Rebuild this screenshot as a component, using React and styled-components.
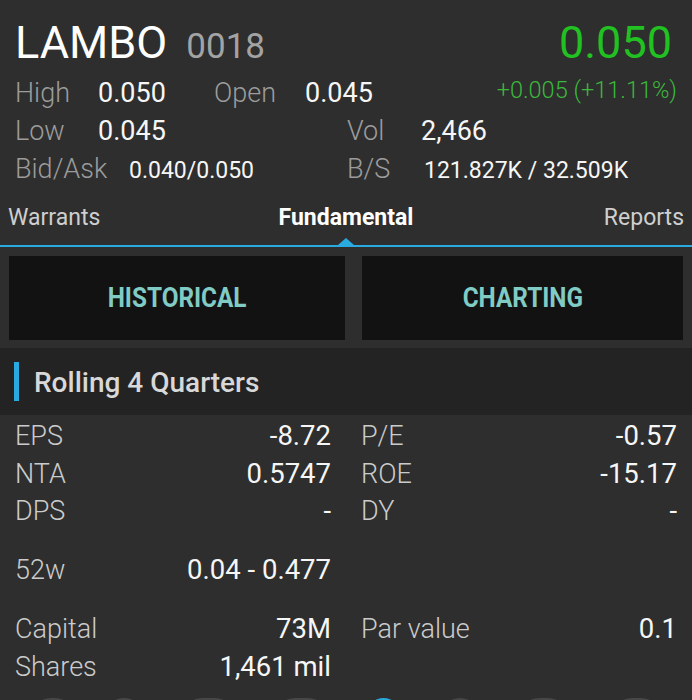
import styled, { createGlobalStyle } from "styled-components";

const GlobalStyle = createGlobalStyle`
  html, body {
    margin: 0;
    padding: 0;
    background: #2e2e2e;
  }
  body {
    font-family: Roboto, "Noto Sans", "Liberation Sans", sans-serif;
  }
`;

const Page = styled.div`
  width: 692px;
  height: 700px;
  overflow: hidden;
  background: #2e2e2e;
  color: #f4f4f4;
`;

const Quote = styled.header`
  padding: 17px 15px 0 15px;
`;

const TitleRow = styled.div`
  display: flex;
  align-items: baseline;
  justify-content: space-between;
  line-height: 52px;
  margin-bottom: 1px;
`;

const Symbol = styled.div`
  display: flex;
  align-items: baseline;
  gap: 19px;
`;

const Name = styled.span`
  font-size: 45px;
  color: #ffffff;
`;

const Code = styled.span`
  font-size: 35px;
  color: #a3a3a3;
`;

const Price = styled.span`
  font-size: 45px;
  color: #22c122;
  margin-right: 5px;
`;

const StatRow = styled.div`
  display: grid;
  grid-template-columns: 332px 1fr;
  height: 38px;
  line-height: 38px;
`;

const Half = styled.div`
  display: flex;
  align-items: baseline;
`;

const StatLabel = styled.span`
  width: ${(p) => p.$w}px;
  font-size: 27px;
  font-weight: 300;
  color: #9c9c9c;
  flex: none;
`;

const StatValue = styled.span`
  width: ${(p) => (p.$w ? `${p.$w}px` : "auto")};
  font-size: ${(p) => (p.$small ? 23 : 27)}px;
  color: #f6f6f6;
  flex: none;
`;

const Change = styled.span`
  justify-self: end;
  align-self: start;
  line-height: 32px;
  font-size: 23.5px;
  font-weight: 300;
  color: #3cb83c;
`;

const TabBar = styled.nav`
  display: grid;
  grid-template-columns: 1fr auto 1fr;
  box-sizing: border-box;
  height: 59px;
  padding: 18px 8px 0 8px;
  border-bottom: 2px solid #29abe2;
`;

const Tab = styled.span`
  position: relative;
  font-size: 23px;
  line-height: 23px;
  font-weight: ${(p) => (p.$active ? 700 : 400)};
  color: ${(p) => (p.$active ? "#ffffff" : "#cfcfcf")};
  justify-self: ${(p) => p.$align || "center"};

  ${(p) =>
    p.$active &&
    `
    &::after {
      content: "";
      position: absolute;
      left: 50%;
      bottom: 0;
      margin-left: -8px;
      border-left: 8px solid transparent;
      border-right: 8px solid transparent;
      border-bottom: 7px solid #29abe2;
    }
  `}
`;

const ActionGrid = styled.div`
  display: grid;
  grid-template-columns: 336px 321px;
  gap: 17px;
  padding: 9px 0 8px 9px;
`;

const ActionButton = styled.button`
  height: 84px;
  border: none;
  background: #121212;
  color: #80cbc4;
  font-family: Roboto, "Noto Sans", sans-serif;
  font-size: 27px;
  font-weight: 700;
  padding: 0;

  span {
    display: inline-block;
    transform: scaleX(0.9);
  }
`;

const SectionHead = styled.div`
  display: flex;
  align-items: center;
  gap: 15px;
  height: 67px;
  padding-left: 14px;
  background: #232323;
`;

const Marker = styled.i`
  width: 5px;
  height: 39px;
  background: #29abe2;
`;

const SectionTitle = styled.span`
  font-size: 28px;
  font-weight: 500;
  color: #d8d8d8;
  margin-top: 2px;
`;

const Data = styled.section`
  display: flex;
  flex-direction: column;
  gap: 21.5px;
  padding: 2px 15px 0 15px;
`;

const DataGrid = styled.div`
  display: grid;
  grid-template-columns: 316px 316px;
  column-gap: 30px;
`;

const Cell = styled.div`
  display: flex;
  justify-content: space-between;
  align-items: baseline;
  height: 37.5px;
  line-height: 37.5px;
`;

const DataLabel = styled.span`
  font-size: 27px;
  font-weight: 300;
  color: #cbcbcb;
`;

const DataValue = styled.span`
  font-size: 27.5px;
  color: #f6f6f6;
`;

const Dock = styled.div`
  display: flex;
  margin-top: 13px;
  padding-left: 31px;
`;

const Dot = styled.span`
  width: ${(p) => p.$w}px;
  height: 40px;
  margin-left: ${(p) => p.$ml}px;
  border-radius: 20px;
  background: ${(p) => (p.$on ? "#2aa7de" : "#474747")};
  flex: none;
`;

const fundamentals = [
  ["EPS", "-8.72", "P/E", "-0.57"],
  ["NTA", "0.5747", "ROE", "-15.17"],
  ["DPS", "-", "DY", "-"],
];

const dots = [
  { w: 44, ml: 0 },
  { w: 36, ml: 31 },
  { w: 53, ml: 40 },
  { w: 53, ml: 40 },
  { w: 33, ml: 39, on: true },
  { w: 40, ml: 40 },
  { w: 49, ml: 39 },
  { w: 49, ml: 44 },
];

const DataRow = ({ label, value, label2, value2 }) => (
  <>
    <Cell>
      <DataLabel>{label}</DataLabel>
      <DataValue>{value}</DataValue>
    </Cell>
    <Cell>
      {label2 && <DataLabel>{label2}</DataLabel>}
      {value2 && <DataValue>{value2}</DataValue>}
    </Cell>
  </>
);

export default function App() {
  return (
    <Page>
      <GlobalStyle />
      <Quote>
        <TitleRow>
          <Symbol>
            <Name>LAMBO</Name>
            <Code>0018</Code>
          </Symbol>
          <Price>0.050</Price>
        </TitleRow>
        <StatRow>
          <Half>
            <StatLabel $w={83}>High</StatLabel>
            <StatValue $w={116}>0.050</StatValue>
            <StatLabel $w={91}>Open</StatLabel>
            <StatValue>0.045</StatValue>
          </Half>
          <Change>+0.005 (+11.11%)</Change>
        </StatRow>
        <StatRow>
          <Half>
            <StatLabel $w={83}>Low</StatLabel>
            <StatValue>0.045</StatValue>
          </Half>
          <Half>
            <StatLabel $w={74}>Vol</StatLabel>
            <StatValue>2,466</StatValue>
          </Half>
        </StatRow>
        <StatRow>
          <Half>
            <StatLabel $w={114}>Bid/Ask</StatLabel>
            <StatValue $small>0.040/0.050</StatValue>
          </Half>
          <Half>
            <StatLabel $w={77}>B/S</StatLabel>
            <StatValue $small>121.827K / 32.509K</StatValue>
          </Half>
        </StatRow>
      </Quote>

      <TabBar>
        <Tab $align="start">Warrants</Tab>
        <Tab $active>Fundamental</Tab>
        <Tab $align="end">Reports</Tab>
      </TabBar>

      <ActionGrid>
        <ActionButton>
          <span>HISTORICAL</span>
        </ActionButton>
        <ActionButton>
          <span>CHARTING</span>
        </ActionButton>
      </ActionGrid>

      <SectionHead>
        <Marker />
        <SectionTitle>Rolling 4 Quarters</SectionTitle>
      </SectionHead>

      <Data>
        <DataGrid>
          {fundamentals.map(([a, b, c, d]) => (
            <DataRow key={a} label={a} value={b} label2={c} value2={d} />
          ))}
        </DataGrid>
        <DataGrid>
          <DataRow label="52w" value="0.04 - 0.477" />
        </DataGrid>
        <DataGrid>
          <DataRow label="Capital" value="73M" label2="Par value" value2="0.1" />
          <DataRow label="Shares" value="1,461 mil" />
        </DataGrid>
      </Data>

      <Dock>
        {dots.map((d, i) => (
          <Dot key={i} $w={d.w} $ml={d.ml} $on={d.on} />
        ))}
      </Dock>
    </Page>
  );
}
